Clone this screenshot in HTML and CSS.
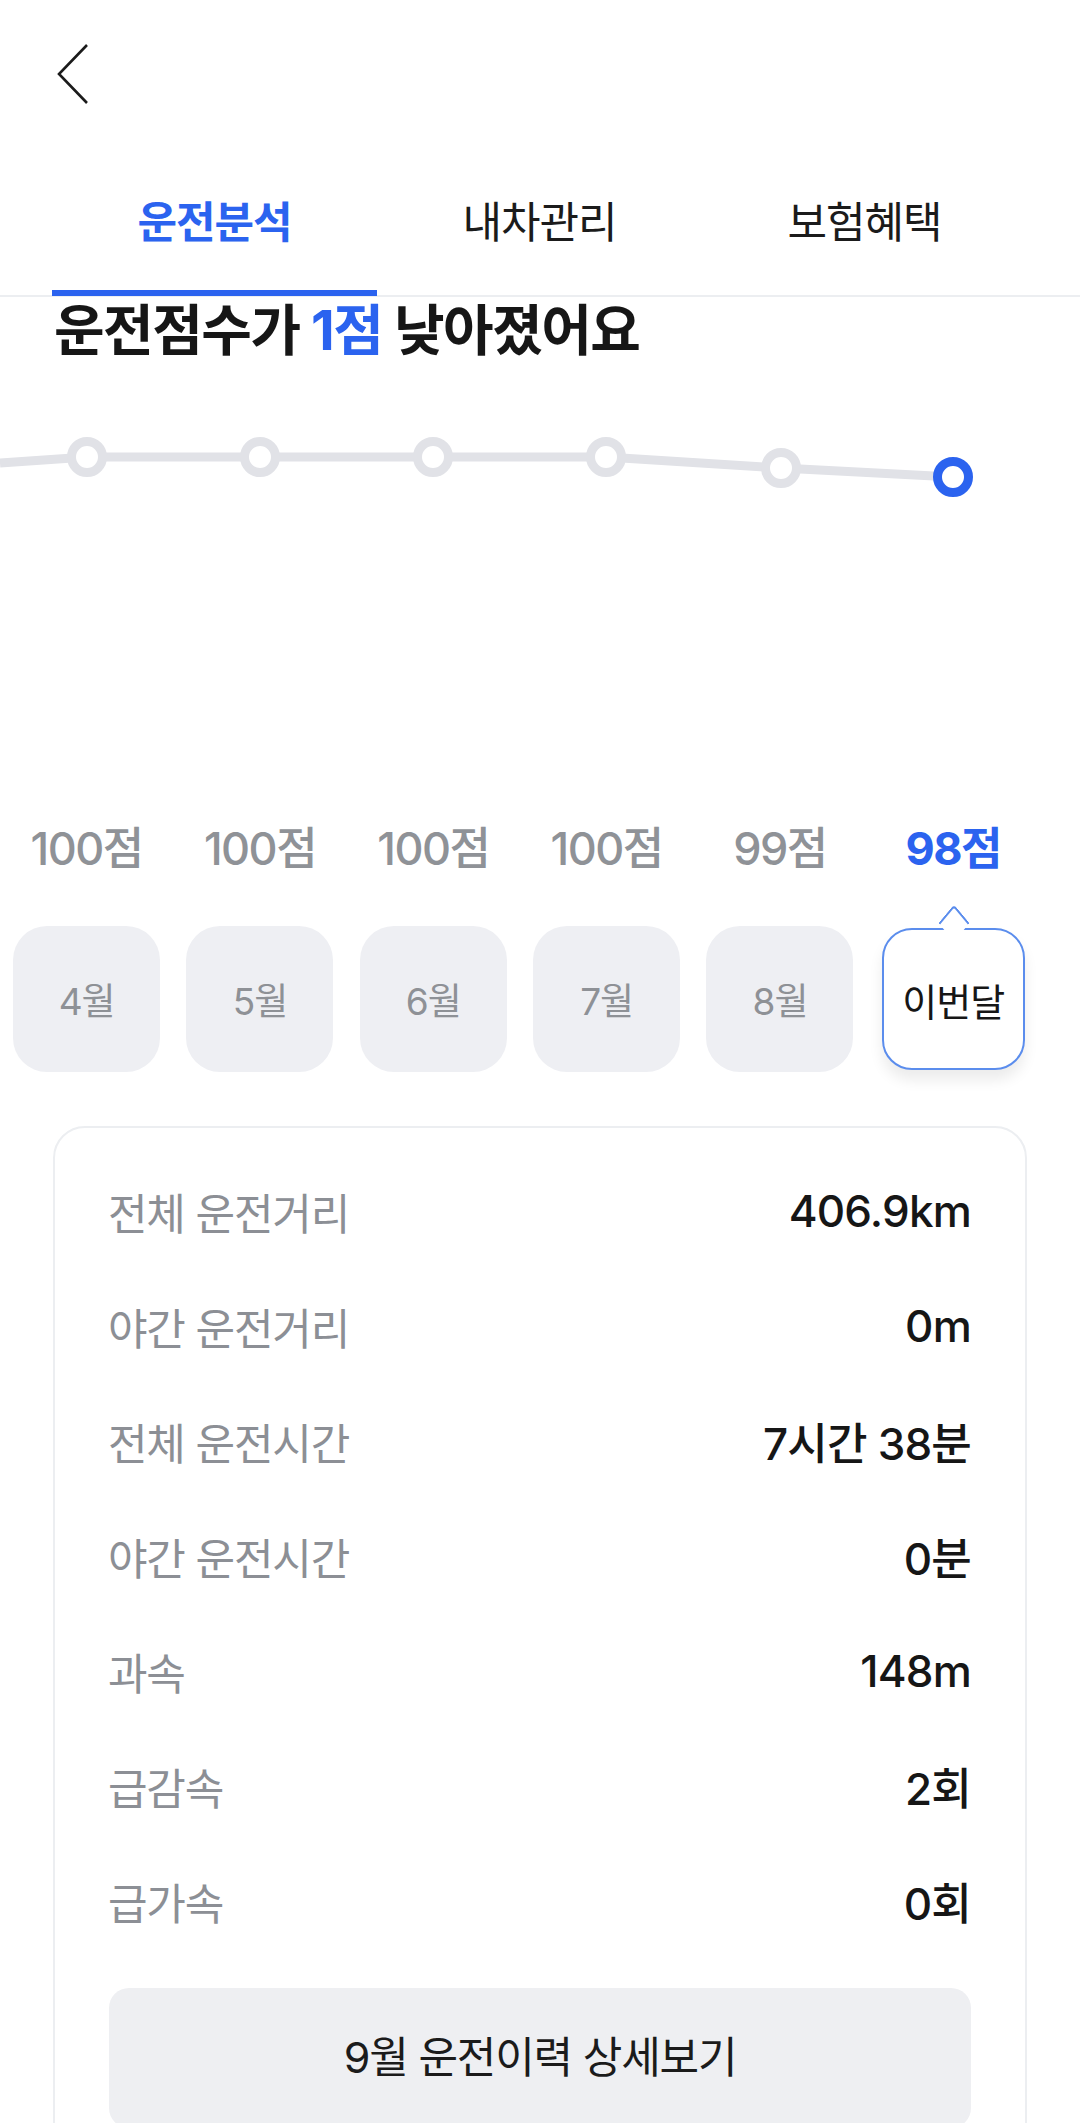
FILE: index.html
```html
<!DOCTYPE html>
<html lang="ko">
<head>
<meta charset="utf-8">
<title>운전분석</title>
<link rel="stylesheet" href="styles.css">
</head>
<body>
<div class="app">
  <header class="topbar">
    <svg class="back" width="34" height="62" viewBox="0 0 34 62"><polyline points="31,2 3,31 31,60" fill="none" stroke="#1b1b1b" stroke-width="2.6"/></svg>
  </header>
  <nav class="tabs">
    <div class="tab active">운전분석</div>
    <div class="tab">내차관리</div>
    <div class="tab">보험혜택</div>
  </nav>
  <h1 class="title">운전점수가 <span class="hl">1점</span> 낮아졌어요</h1>
  <div class="chart">
    <svg width="1080" height="150" viewBox="0 400 1080 150">
      <polyline points="0,463 87,457 260,457 433,457 606,457 781,468 953,477" fill="none" stroke="#e1e2e7" stroke-width="9"/>
      <circle cx="87" cy="457" r="15.5" fill="#fff" stroke="#e1e2e7" stroke-width="9"/>
      <circle cx="260" cy="457" r="15.5" fill="#fff" stroke="#e1e2e7" stroke-width="9"/>
      <circle cx="433" cy="457" r="15.5" fill="#fff" stroke="#e1e2e7" stroke-width="9"/>
      <circle cx="606" cy="457" r="15.5" fill="#fff" stroke="#e1e2e7" stroke-width="9"/>
      <circle cx="781" cy="468" r="15.5" fill="#fff" stroke="#e1e2e7" stroke-width="9"/>
      <circle cx="953" cy="477" r="15.5" fill="#fff" stroke="#2b63ef" stroke-width="9"/>
    </svg>
  </div>
  <div class="scores">
    <div class="score">100점</div>
    <div class="score">100점</div>
    <div class="score">100점</div>
    <div class="score">100점</div>
    <div class="score">99점</div>
    <div class="score current">98점</div>
  </div>
  <div class="months">
    <div class="cell"><div class="month">4월</div></div>
    <div class="cell"><div class="month">5월</div></div>
    <div class="cell"><div class="month">6월</div></div>
    <div class="cell"><div class="month">7월</div></div>
    <div class="cell"><div class="month">8월</div></div>
    <div class="cell"><div class="month selected">이번달</div></div>
  </div>
  <section class="card">
    <div class="row"><span class="label">전체 운전거리</span><span class="value">406.9km</span></div>
    <div class="row"><span class="label">야간 운전거리</span><span class="value">0m</span></div>
    <div class="row"><span class="label">전체 운전시간</span><span class="value">7시간 38분</span></div>
    <div class="row"><span class="label">야간 운전시간</span><span class="value">0분</span></div>
    <div class="row"><span class="label">과속</span><span class="value">148m</span></div>
    <div class="row"><span class="label">급감속</span><span class="value">2회</span></div>
    <div class="row"><span class="label">급가속</span><span class="value">0회</span></div>
    <div class="detail">9월 운전이력 상세보기</div>
  </section>
</div>
</body>
</html>
```

FILE: styles.css
```css
* { box-sizing: border-box; }
html, body { margin: 0; padding: 0; background: #fff; }
body {
  font-family: "Inter", "Noto Sans CJK KR", sans-serif;
  color: #1a1a1a;
  overflow: hidden;
}
.app { width: 1080px; height: 2123px; overflow: hidden; }

.topbar { height: 150px; padding: 43px 0 0 56px; }
.back { display: block; }

.tabs {
  display: flex;
  padding: 0 52px;
  height: 147px;
  border-bottom: 2px solid #eceef1;
}
.tab {
  position: relative;
  flex: 0 0 325px;
  display: flex;
  align-items: center;
  justify-content: center;
  padding-bottom: 8px;
  font-size: 43px;
  letter-spacing: -1px;
  color: #1b1b1b;
}
.tab.active { color: #2b63ef; font-weight: 700; }
.tab.active::after {
  content: "";
  position: absolute;
  left: 0; right: 0; bottom: -1px;
  height: 6px;
  background: #2b63ef;
}

.title {
  margin: 3px 0 0;
  padding: 0 0 0 54px;
  height: 60px;
  font-size: 55px;
  line-height: 60px;
  font-weight: 700;
  letter-spacing: -1.5px;
  color: #161616;
}
.title .hl { color: #2b63ef; }

.chart { height: 150px; margin-top: 40px; }
.chart svg { display: block; }

.scores {
  display: grid;
  grid-template-columns: repeat(6, 173.33px);
  margin-top: 274px;
  height: 50px;
}
.score {
  text-align: center;
  font-size: 45px;
  line-height: 50px;
  font-weight: 500;
  color: #8f9297;
  letter-spacing: -1.5px;
}
.score.current { color: #2b63ef; font-weight: 700; }

.months {
  display: grid;
  grid-template-columns: repeat(6, 173.33px);
  margin-top: 52px;
}
.cell { display: flex; justify-content: center; }
.month {
  width: 147px;
  height: 146px;
  border-radius: 34px;
  background: #eeeff3;
  display: flex;
  align-items: center;
  justify-content: center;
  font-size: 37px;
  color: #8e9196;
  letter-spacing: -1px;
}
.month.selected {
  position: relative;
  width: 143px;
  height: 142px;
  margin-top: 2px;
  background: #fff;
  border: 2px solid #5b8ded;
  border-radius: 30px;
  color: #161616;
  font-size: 38px;
  box-shadow: 0 10px 14px rgba(0, 0, 0, 0.08);
}
.month.selected::before {
  content: "";
  position: absolute;
  top: -18px;
  left: 50%;
  width: 20px;
  height: 20px;
  margin-left: -10px;
  transform: scaleY(1.2) rotate(45deg);
  background: #fff;
  border-top: 2px solid #5b8ded;
  border-left: 2px solid #5b8ded;
  border-top-left-radius: 4px;
}

.card {
  margin: 54px 0 0 53px;
  width: 974px;
  border: 2px solid #eceef1;
  border-radius: 32px;
  padding: 25px 54px 0 53px;
  height: 1100px;
}
.row {
  display: flex;
  justify-content: space-between;
  align-items: center;
  height: 115px;
}
.label {
  font-size: 43px;
  color: #8c8f95;
  letter-spacing: -1.2px;
}
.value {
  font-size: 44px;
  font-weight: 500;
  color: #161616;
  letter-spacing: -0.8px;
}
.detail {
  margin: 30px 0 0 1px;
  height: 140px;
  padding-bottom: 8px;
  border-radius: 20px;
  background: #eeeff2;
  display: flex;
  align-items: center;
  justify-content: center;
  font-size: 43px;
  color: #1b1b1b;
  letter-spacing: -1.2px;
}
```
